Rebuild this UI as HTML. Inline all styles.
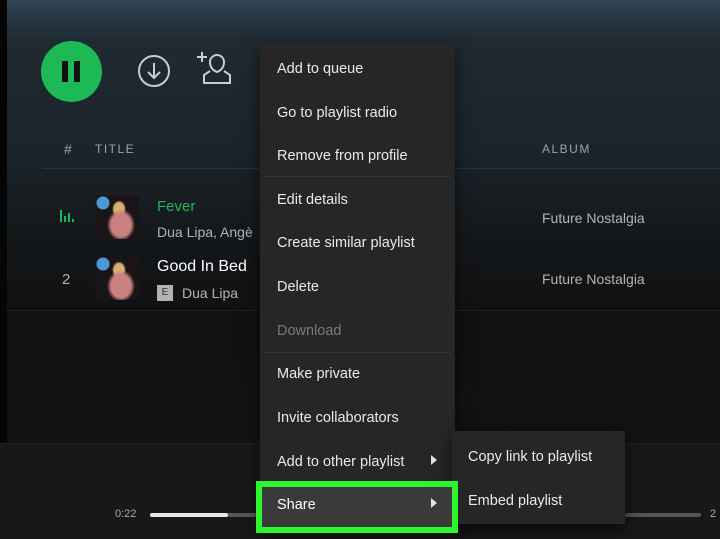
<!DOCTYPE html>
<html><head><meta charset="utf-8"><style>
*{margin:0;padding:0;box-sizing:border-box}
body{width:720px;height:539px;overflow:hidden;position:relative;font-family:"Liberation Sans",sans-serif;background:#121212}
.bg{position:absolute;left:0;top:0;width:720px;height:443px;background:linear-gradient(#2f4656 0,#2a3b47 14px,#1f2a31 40px,#1b242a 150px,#131618 250px,#101112 310px,#121212 443px)}
.leftbar{position:absolute;left:0;top:0;width:7px;height:443px;background:#050505}
.player{position:absolute;left:0;top:443px;width:720px;height:96px;background:#181818;border-top:1px solid #222}
.t{position:absolute;color:#fff;font-size:15px;white-space:nowrap}
.g{color:#b3b3b3}
.hdr{position:absolute;color:#9aa3a8;font-size:12px;letter-spacing:1.5px}
.line{position:absolute;height:1px;background:#2b3338}
.art{position:absolute;width:44px;height:44px;background:radial-gradient(circle at 8px 8px,#4a9ad8 0 6px,transparent 7px),radial-gradient(ellipse at 26px 30px,#c98080 0 10px,transparent 14px),radial-gradient(ellipse at 24px 14px,#d8b070 0 5px,transparent 7px),#1a1416}
.menu{position:absolute;left:260px;top:43px;width:195px;height:489px;background:#262626;box-shadow:0 6px 16px rgba(0,0,0,.6)}
.mi{position:absolute;left:17px;color:#eaeaea;font-size:14.5px}
.sep{position:absolute;left:4px;width:187px;height:1px;background:#333}
.sub{position:absolute;left:452px;top:431px;width:173px;height:93px;background:#262626;box-shadow:0 6px 16px rgba(0,0,0,.6)}
.hl{position:absolute;left:256px;top:481px;width:202px;height:52px;border:6px solid #2ef52e;background:#3a3a3a}
.tri{position:absolute;width:0;height:0;border-top:5px solid transparent;border-bottom:5px solid transparent;border-left:6px solid #e0e0e0}
</style></head><body>
<div class="bg"></div><div class="leftbar"></div>
<svg style="position:absolute;left:41px;top:41px" width="61" height="61" viewBox="0 0 61 61"><circle cx="30.5" cy="30.5" r="30.5" fill="#1db954"/><rect x="21" y="20" width="6" height="21" fill="#111"/><rect x="33" y="20" width="6" height="21" fill="#111"/></svg>
<svg style="position:absolute;left:137px;top:54px" width="34" height="34" viewBox="0 0 34 34" fill="none" stroke="#c8cdd0" stroke-width="2"><circle cx="17" cy="17" r="15"/><path d="M17 9v15M11 18l6 6 6-6"/></svg>
<svg style="position:absolute;left:196px;top:50px" width="40" height="38" viewBox="0 0 40 38" fill="none" stroke="#c8cdd0" stroke-width="2"><path d="M6 2v10M1 7h10"/><path d="M21 22c-5-2-7-6-7-10a7 7 0 0114 0c0 4-2 8-7 10zM14 21l-6 4v8h26v-8l-6-4"/></svg>
<div class="hdr" style="left:64px;top:141px;font-size:14px">#</div>
<div class="hdr" style="left:95px;top:142px">TITLE</div>
<div class="hdr" style="left:542px;top:142px">ALBUM</div>
<div class="line" style="left:42px;top:168px;width:678px"></div>
<svg style="position:absolute;left:59px;top:208px" width="16" height="16"><path d="M2 2v12M6 8v6M10 5v9M14 11v3" stroke="#1db954" stroke-width="2"/></svg>
<div class="art" style="left:95px;top:195px"></div>
<div class="t" style="left:157px;top:198px;color:#1db954">Fever</div>
<div class="t g" style="left:157px;top:224px;font-size:14px">Dua Lipa, Angè</div>
<div class="t g" style="left:62px;top:271px;font-size:15px">2</div>
<div class="art" style="left:95px;top:256px"></div>
<div class="t" style="left:157px;top:258px;font-size:16px">Good In Bed</div>
<div style="position:absolute;left:157px;top:285px;width:16px;height:16px;background:#b3b3b3;color:#333;font-size:10px;text-align:center;line-height:16px">E</div>
<div class="t g" style="left:182px;top:285px;font-size:14px">Dua Lipa</div>
<div class="t g" style="left:542px;top:210px;font-size:14px">Future Nostalgia</div>
<div class="t g" style="left:542px;top:271px;font-size:14px">Future Nostalgia</div>
<div class="line" style="left:7px;top:310px;width:713px;background:#222"></div>
<div class="player"></div>
<div class="t" style="left:115px;top:508px;font-size:11px;color:#aaa">0:22</div>
<div style="position:absolute;left:150px;top:513px;width:106px;height:4px;border-radius:2px;background:#555"></div>
<div style="position:absolute;left:150px;top:513px;width:78px;height:4px;border-radius:2px;background:#e8e8e8"></div>
<div style="position:absolute;left:625px;top:513px;width:76px;height:4px;border-radius:2px;background:#555"></div>
<div class="t" style="left:710px;top:508px;font-size:11px;color:#aaa">2</div>
<div class="menu">
<div class="mi" style="top:18px">Add to queue</div>
<div class="mi" style="top:62px">Go to playlist radio</div>
<div class="mi" style="top:105px">Remove from profile</div>
<div class="sep" style="top:133px"></div>
<div class="mi" style="top:149px">Edit details</div>
<div class="mi" style="top:192px">Create similar playlist</div>
<div class="mi" style="top:236px">Delete</div>
<div class="mi" style="top:280px;color:#7a7a7a">Download</div>
<div class="sep" style="top:309px"></div>
<div class="mi" style="top:323px">Make private</div>
<div class="mi" style="top:367px">Invite collaborators</div>
<div class="mi" style="top:411px">Add to other playlist</div>
<div class="tri" style="left:171px;top:412px"></div>
</div>
<div class="sub">
<div class="mi" style="top:18px;left:16px">Copy link to playlist</div>
<div class="mi" style="top:62px;left:16px">Embed playlist</div>
</div>
<div class="hl"></div>
<div class="t" style="left:277px;top:497px;font-size:14.5px">Share</div>
<div class="tri" style="left:431px;top:498px"></div>
</body></html>
